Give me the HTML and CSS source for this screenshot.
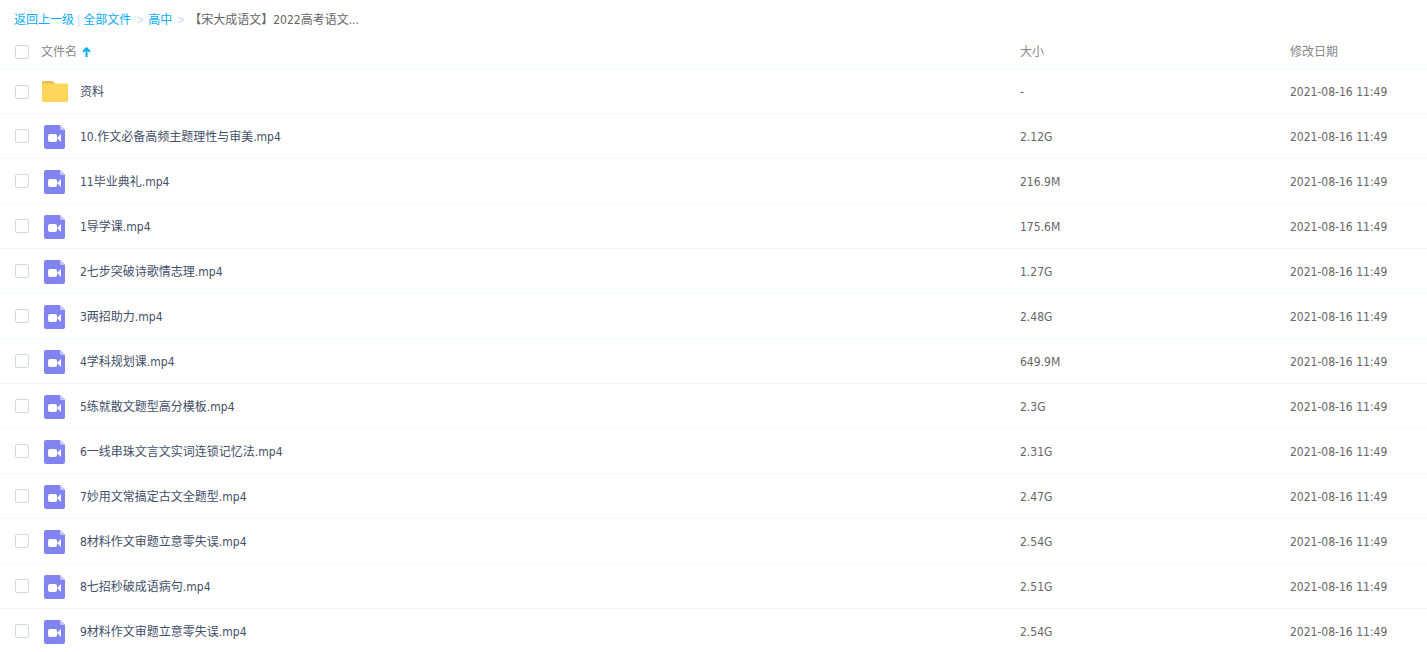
FILE: index.html
```html
<!DOCTYPE html>
<html lang="zh-CN">
<head>
  <meta charset="UTF-8">
  <title>【宋大成语文】2022高考语文</title>
  <link rel="stylesheet" href="styles.css">
</head>
<body>
  <svg class="sprite" aria-hidden="true">
    <symbol id="folder" viewBox="0 0 26 21">
      <path fill="#e9bd4b" d="M1.500 0H10q1 0 1.600.8L13 3v4H0V1.500Q0 0 1.500 0z"/>
      <rect y="2.500" width="26" height="18.500" rx="1.800" fill="#ffd65a"/>
    </symbol>
    <symbol id="video" viewBox="0 0 21 24">
      <path fill="#8183f1" d="M2 0h14l5 5v17q0 2-2 2H2q-2 0-2-2V2q0-2 2-2z"/>
      <path fill="#c5c6fa" d="M16 0l5 5h-3.500Q16 5 16 3.500z"/>
      <rect x="4" y="9" width="9" height="8" rx="2" fill="#fff"/>
      <path fill="#fff" d="M13.500 12.500L17 9v8l-3.500-3.500z"/>
    </symbol>
  </svg>

  <nav class="breadcrumb">
    <a href="#">返回上一级</a>
    <span class="bar">|</span>
    <a href="#">全部文件</a>
    <span class="arrow">&gt;</span>
    <a href="#">高中</a>
    <span class="arrow">&gt;</span>
    <span class="current">【宋大成语文】2022高考语文...</span>
  </nav>

  <table class="files">
    <colgroup>
      <col class="col-check">
      <col class="col-icon">
      <col>
      <col class="col-size">
      <col class="col-date">
    </colgroup>
    <thead>
      <tr>
        <th class="check"><input type="checkbox" aria-label="全选"></th>
        <th class="name" colspan="2">文件名<svg class="sort" viewBox="0 0 9 10" aria-hidden="true"><path d="M4.500 1.200V10M1 4.800l3.500-3.500L8 4.800" fill="none" stroke="#09aaff" stroke-width="2"/></svg></th>
        <th class="size">大小</th>
        <th class="date">修改日期</th>
      </tr>
    </thead>
    <tbody>
      <tr>
        <td class="check"><input type="checkbox" id="f0"></td>
        <td class="icon"><svg class="folder"><use href="#folder"/></svg></td>
        <td class="name"><label for="f0">资料</label></td>
        <td class="size">-</td>
        <td class="date">2021-08-16 11:49</td>
      </tr>
      <tr>
        <td class="check"><input type="checkbox" id="f1"></td>
        <td class="icon"><svg class="video"><use href="#video"/></svg></td>
        <td class="name"><label for="f1">10.作文必备高频主题理性与审美.mp4</label></td>
        <td class="size">2.12G</td>
        <td class="date">2021-08-16 11:49</td>
      </tr>
      <tr>
        <td class="check"><input type="checkbox" id="f2"></td>
        <td class="icon"><svg class="video"><use href="#video"/></svg></td>
        <td class="name"><label for="f2">11毕业典礼.mp4</label></td>
        <td class="size">216.9M</td>
        <td class="date">2021-08-16 11:49</td>
      </tr>
      <tr>
        <td class="check"><input type="checkbox" id="f3"></td>
        <td class="icon"><svg class="video"><use href="#video"/></svg></td>
        <td class="name"><label for="f3">1导学课.mp4</label></td>
        <td class="size">175.6M</td>
        <td class="date">2021-08-16 11:49</td>
      </tr>
      <tr>
        <td class="check"><input type="checkbox" id="f4"></td>
        <td class="icon"><svg class="video"><use href="#video"/></svg></td>
        <td class="name"><label for="f4">2七步突破诗歌情志理.mp4</label></td>
        <td class="size">1.27G</td>
        <td class="date">2021-08-16 11:49</td>
      </tr>
      <tr>
        <td class="check"><input type="checkbox" id="f5"></td>
        <td class="icon"><svg class="video"><use href="#video"/></svg></td>
        <td class="name"><label for="f5">3两招助力.mp4</label></td>
        <td class="size">2.48G</td>
        <td class="date">2021-08-16 11:49</td>
      </tr>
      <tr>
        <td class="check"><input type="checkbox" id="f6"></td>
        <td class="icon"><svg class="video"><use href="#video"/></svg></td>
        <td class="name"><label for="f6">4学科规划课.mp4</label></td>
        <td class="size">649.9M</td>
        <td class="date">2021-08-16 11:49</td>
      </tr>
      <tr>
        <td class="check"><input type="checkbox" id="f7"></td>
        <td class="icon"><svg class="video"><use href="#video"/></svg></td>
        <td class="name"><label for="f7">5练就散文题型高分模板.mp4</label></td>
        <td class="size">2.3G</td>
        <td class="date">2021-08-16 11:49</td>
      </tr>
      <tr>
        <td class="check"><input type="checkbox" id="f8"></td>
        <td class="icon"><svg class="video"><use href="#video"/></svg></td>
        <td class="name"><label for="f8">6一线串珠文言文实词连锁记忆法.mp4</label></td>
        <td class="size">2.31G</td>
        <td class="date">2021-08-16 11:49</td>
      </tr>
      <tr>
        <td class="check"><input type="checkbox" id="f9"></td>
        <td class="icon"><svg class="video"><use href="#video"/></svg></td>
        <td class="name"><label for="f9">7妙用文常搞定古文全题型.mp4</label></td>
        <td class="size">2.47G</td>
        <td class="date">2021-08-16 11:49</td>
      </tr>
      <tr>
        <td class="check"><input type="checkbox" id="f10"></td>
        <td class="icon"><svg class="video"><use href="#video"/></svg></td>
        <td class="name"><label for="f10">8材料作文审题立意零失误.mp4</label></td>
        <td class="size">2.54G</td>
        <td class="date">2021-08-16 11:49</td>
      </tr>
      <tr>
        <td class="check"><input type="checkbox" id="f11"></td>
        <td class="icon"><svg class="video"><use href="#video"/></svg></td>
        <td class="name"><label for="f11">8七招秒破成语病句.mp4</label></td>
        <td class="size">2.51G</td>
        <td class="date">2021-08-16 11:49</td>
      </tr>
      <tr>
        <td class="check"><input type="checkbox" id="f12"></td>
        <td class="icon"><svg class="video"><use href="#video"/></svg></td>
        <td class="name"><label for="f12">9材料作文审题立意零失误.mp4</label></td>
        <td class="size">2.54G</td>
        <td class="date">2021-08-16 11:49</td>
      </tr>
    </tbody>
  </table>
</body>
</html>
```

FILE: styles.css
```css
body {
  margin: 0;
  font-family: "DejaVu Sans Condensed", "Noto Sans CJK SC", sans-serif;
  font-size: 12px;
  line-height: 18px;
  color: #666;
  background-color: #fff;
}
.sprite {
  display: none;
}
.breadcrumb {
  display: flex;
  gap: 3px;
  height: 18px;
  padding: 11px 14px 3px;
}
.breadcrumb a {
  color: #09aaff;
  text-decoration: none;
}
.breadcrumb .bar,
.breadcrumb .arrow {
  font-family: "Liberation Sans", sans-serif;
  color: #c4d8f4;
}
.breadcrumb .arrow {
  padding: 0 2px;
}
.files {
  width: 100%;
  table-layout: fixed;
  border-collapse: separate;
  border-spacing: 0;
}
.col-check {
  width: 41px;
}
.col-icon {
  width: 39px;
}
.col-size {
  width: 270px;
}
.col-date {
  width: 137px;
}
.files th,
.files td {
  box-sizing: border-box;
  height: 45px;
  padding: 2px 0 0;
  border-bottom: 1px solid #f2f6fd;
  text-align: left;
  vertical-align: middle;
}
.files th {
  height: 38px;
  color: #888;
  font-weight: normal;
}
.files tbody tr:first-child td {
  height: 44px;
  padding-top: 0;
}
.files .check,
.files tbody tr:first-child .check {
  padding-left: 15px;
}
.files td.check {
  padding-top: 0;
}
.files td.name {
  color: #424e67;
}
input[type="checkbox"] {
  appearance: none;
  display: block;
  box-sizing: border-box;
  width: 14px;
  height: 14px;
  margin: 0;
  border: 1px solid #d2d9e6;
  border-radius: 2px;
  background-color: #fff;
}
input[type="checkbox"]:checked {
  background-color: #09aaff;
  border-color: #09aaff;
}
.sort {
  width: 9px;
  height: 10px;
  margin-left: 5px;
  vertical-align: -1px;
}
.folder,
.video {
  display: block;
}
.folder {
  width: 26px;
  height: 21px;
  margin-left: 1px;
}
.video {
  width: 21px;
  height: 24px;
  margin-left: 3px;
}
```
